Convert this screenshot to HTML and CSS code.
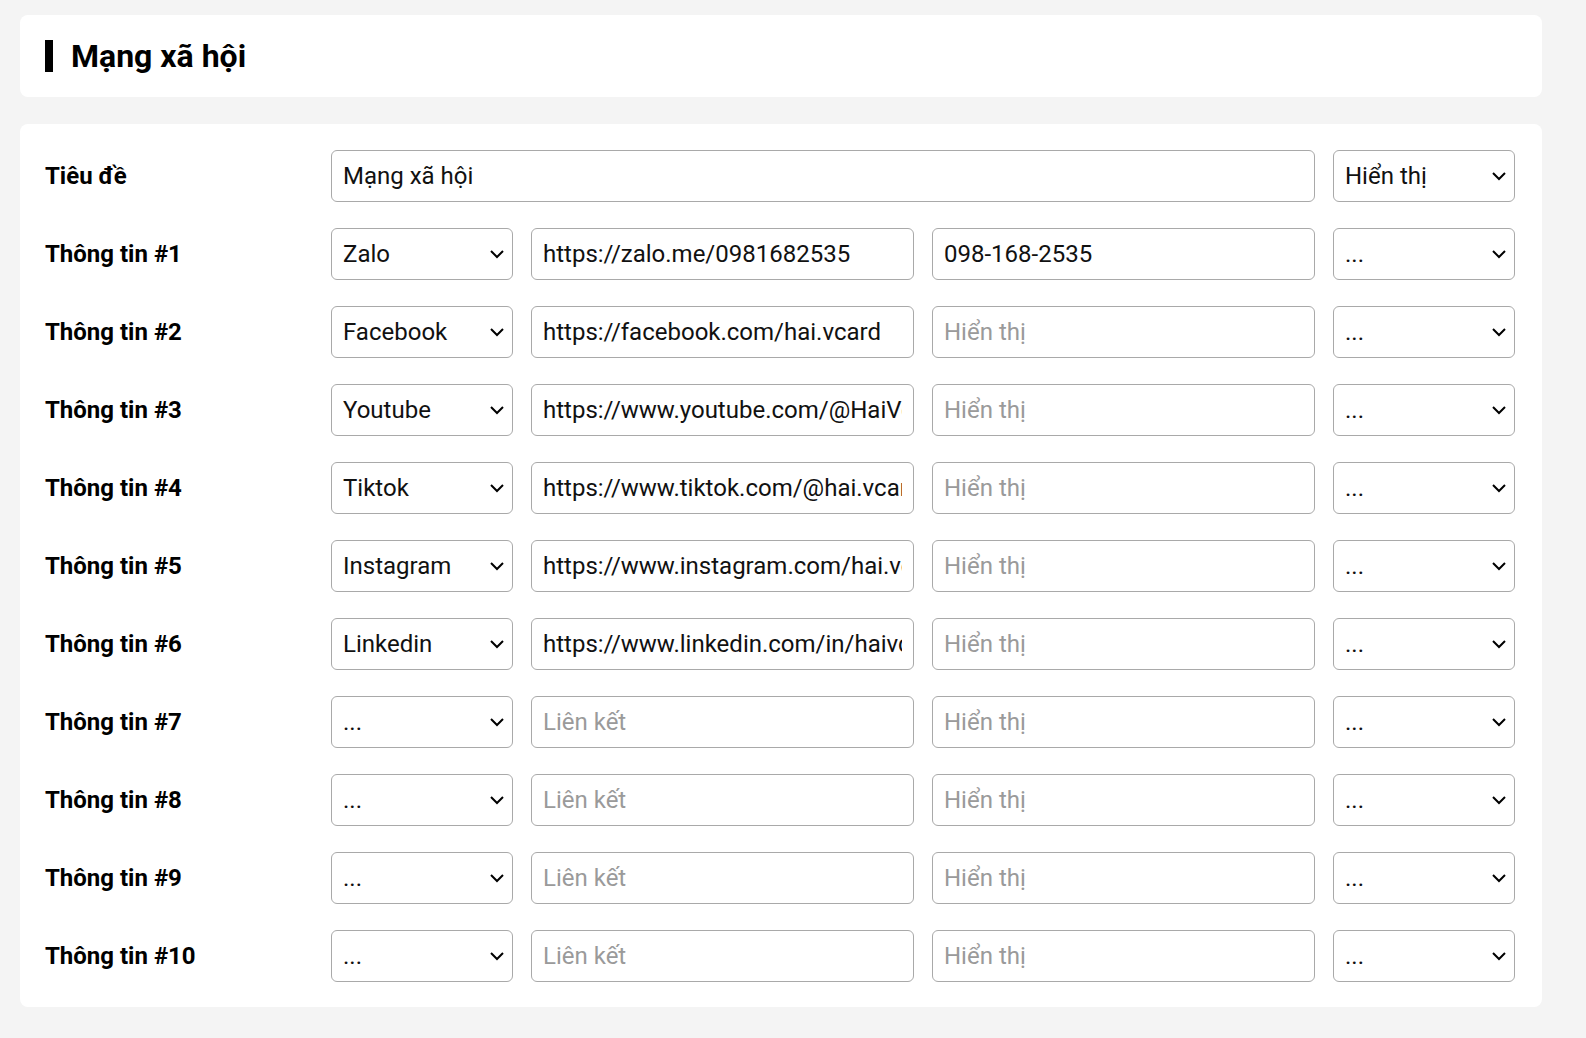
FILE: index.html
```html
<!DOCTYPE html>
<html>
<head>
<meta charset="utf-8">
<title>Mạng xã hội</title>
<link rel="stylesheet" href="styles.css">
</head>
<body>
<div class="card head">
<h2 class="title">Mạng xã hội</h2>
</div>
<div class="card form">
<label class="lbl">Tiêu đề</label>
<input type="text" class="field wide" value="Mạng xã hội">
<select class="field"><option>Hiển thị</option></select>

<label class="lbl">Thông tin #1</label>
<select class="field"><option>Zalo</option></select>
<input type="text" class="field" value="https://zalo.me/0981682535" placeholder="Liên kết">
<input type="text" class="field" value="098-168-2535" placeholder="Hiển thị">
<select class="field"><option>...</option></select>

<label class="lbl">Thông tin #2</label>
<select class="field"><option>Facebook</option></select>
<input type="text" class="field" value="https://facebook.com/hai.vcard" placeholder="Liên kết">
<input type="text" class="field" placeholder="Hiển thị">
<select class="field"><option>...</option></select>

<label class="lbl">Thông tin #3</label>
<select class="field"><option>Youtube</option></select>
<input type="text" class="field" value="https://www.youtube.com/@HaiVcard" placeholder="Liên kết">
<input type="text" class="field" placeholder="Hiển thị">
<select class="field"><option>...</option></select>

<label class="lbl">Thông tin #4</label>
<select class="field"><option>Tiktok</option></select>
<input type="text" class="field" value="https://www.tiktok.com/@hai.vcard" placeholder="Liên kết">
<input type="text" class="field" placeholder="Hiển thị">
<select class="field"><option>...</option></select>

<label class="lbl">Thông tin #5</label>
<select class="field"><option>Instagram</option></select>
<input type="text" class="field" value="https://www.instagram.com/hai.vcard" placeholder="Liên kết">
<input type="text" class="field" placeholder="Hiển thị">
<select class="field"><option>...</option></select>

<label class="lbl">Thông tin #6</label>
<select class="field"><option>Linkedin</option></select>
<input type="text" class="field" value="https://www.linkedin.com/in/haivcard" placeholder="Liên kết">
<input type="text" class="field" placeholder="Hiển thị">
<select class="field"><option>...</option></select>

<label class="lbl">Thông tin #7</label>
<select class="field"><option>...</option></select>
<input type="text" class="field" placeholder="Liên kết">
<input type="text" class="field" placeholder="Hiển thị">
<select class="field"><option>...</option></select>

<label class="lbl">Thông tin #8</label>
<select class="field"><option>...</option></select>
<input type="text" class="field" placeholder="Liên kết">
<input type="text" class="field" placeholder="Hiển thị">
<select class="field"><option>...</option></select>

<label class="lbl">Thông tin #9</label>
<select class="field"><option>...</option></select>
<input type="text" class="field" placeholder="Liên kết">
<input type="text" class="field" placeholder="Hiển thị">
<select class="field"><option>...</option></select>

<label class="lbl">Thông tin #10</label>
<select class="field"><option>...</option></select>
<input type="text" class="field" placeholder="Liên kết">
<input type="text" class="field" placeholder="Hiển thị">
<select class="field"><option>...</option></select>
</div>
</body>
</html>
```
FILE: styles.css
```css
html,body{background:#f4f4f4}
body{margin:0;padding:15px 44px 0 20px;font-family:Roboto,"Noto Sans",sans-serif;color:#000}
.card{background:#fff;border-radius:8px}
.head{height:82px;display:flex;align-items:center;padding:0 25px;margin-bottom:27px}
.title{margin:0;font-size:32px;font-weight:bold;border-left:8px solid #000;padding-left:18px;line-height:32px}
.form{display:grid;grid-template-columns:268px 182px 383px 383px 182px;column-gap:18px;row-gap:26px;padding:26px 26px 25px 25px;align-items:center}
.lbl{font-size:24px;font-weight:bold}
.field{box-sizing:border-box;height:52px;width:100%;border:1px solid #a9a9a9;border-radius:6px;background:#fff;font-family:inherit;font-size:24px;color:#111;padding:0 11px;outline:none}
.field::placeholder{color:#9a9a9a}
.wide{grid-column:span 3}
select.field{appearance:none;-webkit-appearance:none;padding-right:34px;background-image:url("data:image/svg+xml,%3Csvg xmlns='http://www.w3.org/2000/svg' width='14' height='9' viewBox='0 0 14 9'%3E%3Cpath d='M1 1l6 6 6-6' fill='none' stroke='%23000' stroke-width='2'/%3E%3C/svg%3E");background-repeat:no-repeat;background-position:right 8px center}
```
